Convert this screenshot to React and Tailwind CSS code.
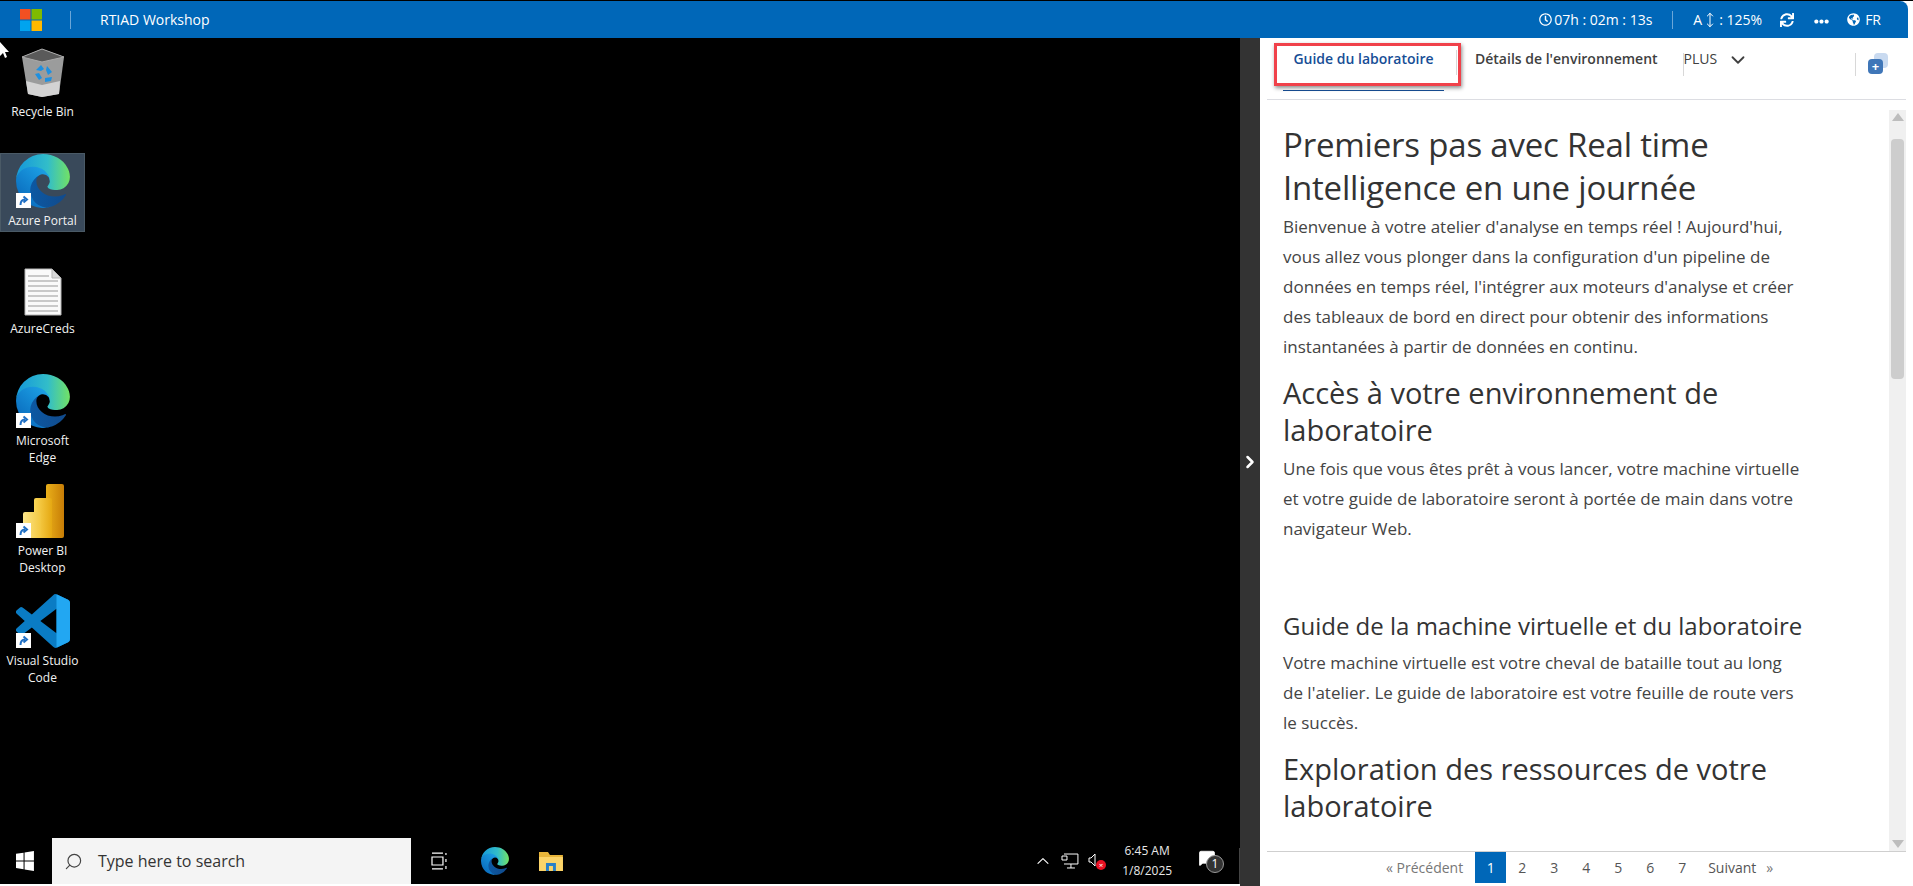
import React from 'react';
import { ChevronDown, ChevronRight, MoveVertical, Search, ChevronUp, MessageSquare } from 'lucide-react';
import { FaRegClock, FaSync, FaEllipsisH, FaGlobeAmericas } from 'react-icons/fa';

const uiFont = { fontFamily: '"Open Sans", "Noto Sans", sans-serif' };

const MsLogo = () => (
  <svg width="22" height="22" viewBox="0 0 22 22" className="shrink-0">
    <rect x="0" y="0" width="10.5" height="10.5" fill="#f25022" />
    <rect x="11.5" y="0" width="10.5" height="10.5" fill="#7fba00" />
    <rect x="0" y="11.5" width="10.5" height="10.5" fill="#00a4ef" />
    <rect x="11.5" y="11.5" width="10.5" height="10.5" fill="#ffb900" />
  </svg>
);

const EdgeLogo = ({ size = 54 }) => (
  <svg width={size} height={size} viewBox="0 0 256 256">
    <defs>
      <linearGradient id="edgeA" x1="60" y1="180" x2="240" y2="180" gradientUnits="userSpaceOnUse">
        <stop offset="0" stopColor="#0c59a4" />
        <stop offset="1" stopColor="#114a8b" />
      </linearGradient>
      <linearGradient id="edgeB" x1="150" y1="100" x2="40" y2="220" gradientUnits="userSpaceOnUse">
        <stop offset="0" stopColor="#1b9de2" />
        <stop offset="1" stopColor="#0b6fc0" />
      </linearGradient>
      <linearGradient id="edgeC" x1="30" y1="90" x2="250" y2="90" gradientUnits="userSpaceOnUse">
        <stop offset="0" stopColor="#1a9fd8" />
        <stop offset="0.55" stopColor="#32bdc9" />
        <stop offset="1" stopColor="#6fe06a" />
      </linearGradient>
    </defs>
    <path fill="url(#edgeA)" d="M231 190.5c-3.4 1.8-6.9 3.4-10.5 4.7a101.5 101.5 0 0 1-35.8 6.4c-47.2 0-88.3-32.4-88.3-74.1a31.4 31.4 0 0 1 16.4-27.3c-42.7 1.8-53.7 46.3-53.7 72.3 0 73.8 68 81.2 82.7 81.2 7.9 0 19.8-2.3 27-4.6l1.3-.4a128 128 0 0 0 66.4-52.7 4 4 0 0 0-5.5-5.5z" />
    <path fill="url(#edgeB)" d="M105.7 241.4A79.2 79.2 0 0 1 83 220a80.7 80.7 0 0 1 29.5-120c3.2-1.5 8.5-4.1 15.6-4a32.4 32.4 0 0 1 25.7 13 31.9 31.9 0 0 1 6.3 18.7c0-.2 24.5-79.6-80-79.6-43.9 0-80 41.6-80 78.2a130.2 130.2 0 0 0 12.1 56 128 128 0 0 0 156.4 67 75.5 75.5 0 0 1-62.8-8z" />
    <path fill="url(#edgeC)" d="M152.3 148.9c-.8 1-3.3 2.5-3.3 5.7 0 2.6 1.7 5.1 4.7 7.2 14.3 9.9 41.2 8.6 41.3 8.6a59.2 59.2 0 0 0 30.1-8.3 61 61 0 0 0 30.4-52.5c.3-22.2-7.9-37-11.2-43.5C223.3 25 179.4 0 128 0A128 128 0 0 0 0 126.2c.5-36.5 36.8-66 80-66 3.5 0 23.5.3 42 10a72.6 72.6 0 0 1 30.9 29.3c6.1 10.6 7.2 24.1 7.2 29.5s-2.7 13.3-7.8 19.9z" />
  </svg>
);

const RecycleBin = () => (
  <svg width="44" height="50" viewBox="0 0 44 50">
    <path d="M1 9 L21 1 L43 9 L38 46 L21 49 L7 46 Z" fill="#9b9c9c" />
    <path d="M1 9 L21 1 L43 9 L21 14 Z" fill="#5a5a5a" stroke="#aaa" strokeWidth="1" />
    <path d="M5 33 L21 37 L39 33 L38 46 L21 49 L7 46 Z" fill="#d3d3d3" />
    <path d="M15 22 l5-5 3 4-3 2z M26 18 l5 6-4 3-2-5z M18 32 l-4-6 4-1 3 5z M24 34 l6-1 1-4-7 1z" fill="#1e90e0" />
  </svg>
);

const DocIcon = () => (
  <svg width="38" height="48" viewBox="0 0 38 48">
    <path d="M1 1 H28 L37 10 V47 H1 Z" fill="#fafafa" stroke="#b5b5b5" strokeWidth="1" />
    <path d="M28 1 V10 H37 Z" fill="#d8d8d8" stroke="#b5b5b5" strokeWidth="1" />
    <path d="M4 8 H25 M4 13 H34 M4 18 H34 M4 23 H34 M4 28 H34 M4 33 H34 M4 38 H34 M4 43 H34" stroke="#b9b9b9" strokeWidth="1.5" />
  </svg>
);

const PowerBi = () => (
  <svg width="42" height="54" viewBox="0 0 42 54">
    <defs>
      <linearGradient id="pbA" x1="0" y1="0" x2="1" y2="0">
        <stop offset="0" stopColor="#eab01a" />
        <stop offset="1" stopColor="#c77d06" />
      </linearGradient>
      <linearGradient id="pbB" x1="0" y1="0" x2="1" y2="0">
        <stop offset="0" stopColor="#fbd757" />
        <stop offset="1" stopColor="#e5a812" />
      </linearGradient>
      <linearGradient id="pbC" x1="0" y1="0" x2="1" y2="0">
        <stop offset="0" stopColor="#fde68a" />
        <stop offset="1" stopColor="#f3c73f" />
      </linearGradient>
    </defs>
    <rect x="24" y="0" width="18" height="54" rx="2" fill="url(#pbA)" />
    <rect x="12" y="14" width="18" height="40" rx="2" fill="url(#pbB)" />
    <rect x="1" y="28" width="18" height="26" rx="2" fill="url(#pbC)" />
  </svg>
);

const VsCode = () => (
  <svg width="54" height="54" viewBox="0 0 24 24">
    <path fill="#0a7cc4" d="M23.15 2.587L18.21.21a1.494 1.494 0 0 0-1.705.29l-9.46 8.63-4.12-3.128a.999.999 0 0 0-1.276.057L.327 7.261A1 1 0 0 0 .326 8.74L3.899 12 .326 15.26a1 1 0 0 0 .001 1.479L1.65 17.94a.999.999 0 0 0 1.276.057l4.12-3.128 9.46 8.63a1.492 1.492 0 0 0 1.704.29l4.942-2.377A1.5 1.5 0 0 0 24 20.06V3.939a1.5 1.5 0 0 0-.85-1.352zm-5.146 14.861L10.826 12l7.178-5.448v10.896z" />
    <path fill="#22a7f2" d="M18 .11l5.15 2.48A1.5 1.5 0 0 1 24 3.94v16.12a1.5 1.5 0 0 1-.85 1.35L18 23.89z" />
  </svg>
);

const ShortcutBadge = () => (
  <span className="absolute left-0 bottom-0 flex h-[15px] w-[15px] items-center justify-center bg-white">
    <svg width="11" height="11" viewBox="0 0 11 11">
      <path d="M2.5 10 C2.5 6 4 4.5 7 4.5 M5.5 1.5 L9 4.5 L5.5 7.5" fill="none" stroke="#1f6fc4" strokeWidth="2" />
    </svg>
  </span>
);

const DesktopIcon = ({ children, label, height, shortcut, selected, iconBox = 'h-[54px] w-[54px]' }) => (
  <div className={`flex w-[85px] flex-col items-center ${height} ${selected ? 'border border-[#4a5a66] bg-[#39495a]' : ''}`}>
    <div className={`relative flex shrink-0 items-center justify-center ${iconBox}`}>
      {children}
      {shortcut && <ShortcutBadge />}
    </div>
    <div className="mt-1 whitespace-pre-line text-center text-[12px] leading-[17px] text-[#f2f2f2]">{label}</div>
  </div>
);

const TopBar = () => (
  <div className="flex h-[37px] shrink-0 items-center rounded-tr-lg bg-[#0067b8] pl-[20px] pr-[27px] text-white">
    <MsLogo />
    <div className="ml-[28px] h-[18px] w-px bg-[#6aa6d8]" />
    <div className="ml-[29px] text-[14px]">RTIAD Workshop</div>
    <div className="ml-auto flex items-center text-[14px]">
      <FaRegClock className="h-[13px] w-[13px]" />
      <span className="ml-[2px]">07h : 02m : 13s</span>
      <div className="ml-[20px] h-[18px] w-px bg-[#6aa6d8]" />
      <span className="ml-[20px]">A</span>
      <MoveVertical className="h-[22px] w-[16px]" strokeWidth={1.5} />
      <span className="ml-[1px]">: 125%</span>
      <FaSync className="ml-[18px] h-[14px] w-[14px]" />
      <FaEllipsisH className="ml-[20px] mt-[4px] h-[15px] w-[15px]" />
      <FaGlobeAmericas className="ml-[18px] h-[13px] w-[13px]" />
      <span className="ml-[5px]">FR</span>
    </div>
  </div>
);

const Tabs = () => (
  <div className="relative flex h-[62px] shrink-0 border-b border-[#dcdde2] pl-[16px] text-[14px] text-[#404040]">
    <div className="flex h-[53px] w-[161px] justify-center border-b border-[#174e96] pt-[10px] font-semibold text-[#174e96]">
      Guide du laboratoire
    </div>
    <div className="ml-[12px] mt-[12px] h-[25px] w-px bg-[#d8d8d8]" />
    <div className="ml-[18px] pt-[10px] font-semibold text-[#404040]">Détails de l'environnement</div>
    <div className="ml-[25px] mt-[15px] flex h-[23px] items-start border-l border-[#d8d8d8] pl-0">
      <span className="-mt-[5px] text-[14px]">PLUS</span>
      <ChevronDown className="-mt-[4px] ml-[10px] h-[22px] w-[22px]" strokeWidth={2} />
    </div>
    <div className="ml-auto mr-[18px] mt-[15px] flex h-[23px] border-l border-[#d8d8d8] pl-[12px]">
      <div className="relative h-[21px] w-[20px]">
        <div className="absolute right-0 top-0 h-[15px] w-[14px] rounded-[4px] bg-[#c9daf0]" />
        <div className="absolute bottom-0 left-0 flex h-[15px] w-[15px] items-center justify-center rounded-[4px] bg-[#3f76b8] text-[13px] font-bold leading-none text-white">+</div>
      </div>
    </div>
    {/* red annotation from the screenshot */}
    <div className="absolute left-[7px] top-[5px] h-[43px] w-[187px] border-[3px] border-[#f0414a] shadow-[1px_2px_4px_rgba(0,0,0,0.45)]" />
  </div>
);

const Scrollbar = () => (
  <div className="flex w-[17px] shrink-0 flex-col items-center justify-between bg-[#f0f0f0] py-[3px]">
    <div className="flex flex-1 flex-col items-center">
      <div className="h-0 w-0 border-x-[6px] border-b-[8px] border-x-transparent border-b-[#bdbdbd]" />
      <div className="mt-[18px] h-[240px] w-[13px] rounded-sm bg-[#cdcdcd]" />
    </div>
    <div className="h-0 w-0 border-x-[6px] border-t-[8px] border-x-transparent border-t-[#bdbdbd]" />
  </div>
);

const Article = () => (
  <div className="flex-1 overflow-hidden pl-[16px] pr-[8px] text-[#333]">
    <h1 className="pt-[13px] text-[33px] leading-[43px] tracking-[-0.2px] text-[#333]">
      Premiers pas avec Real time<br />Intelligence en une journée
    </h1>
    <p className="mt-[3px] text-[17px] leading-[30px] text-[#444]">
      Bienvenue à votre atelier d'analyse en temps réel ! Aujourd'hui,<br />
      vous allez vous plonger dans la configuration d'un pipeline de<br />
      données en temps réel, l'intégrer aux moteurs d'analyse et créer<br />
      des tableaux de bord en direct pour obtenir des informations<br />
      instantanées à partir de données en continu.
    </p>
    <h2 className="mt-[12px] text-[29px] leading-[37px] text-[#333]">
      Accès à votre environnement de<br />laboratoire
    </h2>
    <p className="mt-[6px] text-[17px] leading-[30px] text-[#444]">
      Une fois que vous êtes prêt à vous lancer, votre machine virtuelle<br />
      et votre guide de laboratoire seront à portée de main dans votre<br />
      navigateur Web.
    </p>
    <h3 className="mt-[66px] text-[24px] leading-[32px] text-[#333]">
      Guide de la machine virtuelle et du laboratoire
    </h3>
    <p className="mt-[6px] text-[17px] leading-[30px] text-[#444]">
      Votre machine virtuelle est votre cheval de bataille tout au long<br />
      de l'atelier. Le guide de laboratoire est votre feuille de route vers<br />
      le succès.
    </p>
    <h2 className="mt-[12px] text-[29px] leading-[37px] text-[#333]">
      Exploration des ressources de votre<br />laboratoire
    </h2>
  </div>
);

const Pagination = () => (
  <div className="flex h-[32px] shrink-0 items-center border-t border-[#cfcfcf] pl-[119px] text-[14px] text-[#555]">
    <span className="mr-[12px] text-[#777]">« Précédent</span>
    <span className="flex h-full w-[31px] items-center justify-center bg-[#0067b8] text-white">1</span>
    {['2', '3', '4', '5', '6', '7'].map((n) => (
      <span key={n} className="flex h-full w-[32px] items-center justify-center">{n}</span>
    ))}
    <span className="ml-[10px]">Suivant</span>
    <span className="ml-[10px] text-[#777]">»</span>
  </div>
);

const Taskbar = () => (
  <div className="flex h-[46px] shrink-0 items-center bg-black text-white">
    <svg width="18" height="20" viewBox="0 0 18 20" className="ml-[16px]">
      <path fill="#fff" d="M0 2.8 L7.6 1.6 V9.4 H0 Z M8.6 1.4 L18 0 V9.4 H8.6 Z M0 10.4 H7.6 V18.2 L0 17 Z M8.6 10.4 H18 V20 L8.6 18.6 Z" />
    </svg>
    <div className="ml-[18px] flex h-full w-[360px] items-center bg-[#f4f4f4] pl-[12px] text-[16px] text-[#333]">
      <Search className="h-[19px] w-[19px] -scale-x-100 text-[#444]" strokeWidth={1.5} />
      <span className="ml-[15px]">Type here to search</span>
    </div>
    <svg width="17" height="18" viewBox="0 0 17 18" className="ml-[20px]" fill="none" stroke="#fff" strokeWidth="1.2">
      <path d="M1 1 H12 M1 17 H12 M1 5 H12 V13 H1 Z M15 1 V3 M15 7 V10 M15 14 V17" />
    </svg>
    <div className="ml-[34px]"><EdgeLogo size={28} /></div>
    <svg width="24" height="24" viewBox="0 0 24 24" className="ml-[30px]">
      <path fill="#e8b53a" d="M0 3 H9 L11 6 H24 V22 H0 Z" />
      <path fill="#fcd469" d="M0 8 H24 V22 H0 Z" />
      <rect x="7" y="14" width="10" height="8" fill="#2a80c8" />
      <rect x="10" y="17" width="4" height="5" fill="#fcd469" />
    </svg>
    <ChevronUp className="ml-[470px] h-[20px] w-[20px]" strokeWidth={1.3} />
    <svg width="18" height="16" viewBox="0 0 18 16" className="ml-[8px]" fill="none" stroke="#fff" strokeWidth="1">
      <path d="M3 1 H17 V11 H3 M10 11 V15 M6 15 H14 M1 3 H6 V7 H1 Z" />
    </svg>
    <div className="relative ml-[9px] h-[16px] w-[18px]">
      <svg width="10" height="14" viewBox="0 0 10 14" fill="none" stroke="#fff" strokeWidth="1"><path d="M1 5 H3 L7 1 V13 L3 9 H1 Z" /></svg>
      <span className="absolute -bottom-[1px] right-0 flex h-[10px] w-[10px] items-center justify-center rounded-full bg-[#e81123] text-[8px] leading-none text-white">×</span>
    </div>
    <div className="ml-[16px] flex w-[50px] flex-col items-center text-[12px] leading-[20px] text-[#e8e8e8]">
      <span>6:45 AM</span>
      <span>1/8/2025</span>
    </div>
    <div className="relative ml-[26px] h-[24px] w-[26px]">
      <MessageSquare className="h-[18px] w-[18px] fill-white" strokeWidth={1} />
      <span className="absolute bottom-0 right-0 flex h-[18px] w-[18px] items-center justify-center rounded-full border border-[#999] bg-[#333] text-[12px] leading-none">1</span>
    </div>
    <div className="ml-[15px] mt-[10px] h-[36px] w-px bg-[#444]" />
  </div>
);

const App = () => {
  return (
    <div className="relative flex h-[886px] w-[1913px] flex-col overflow-hidden border-t border-black bg-white pr-[5px]" style={uiFont}>
      <TopBar />
      <div className="flex min-h-0 flex-1">
        <div className="flex w-[1240px] shrink-0 flex-col bg-black">
          <div className="flex flex-1 flex-col pl-0 pt-[9px]">
            <DesktopIcon label="Recycle Bin" height="h-[106px]" iconBox="h-[52px] w-[44px]"><RecycleBin /></DesktopIcon>
            <DesktopIcon label="Azure Portal" height="h-[79px]" shortcut selected><EdgeLogo /></DesktopIcon>
            <div className="h-[36px]" />
            <DesktopIcon label="AzureCreds" height="h-[106px]" iconBox="h-[48px] w-[38px]"><DocIcon /></DesktopIcon>
            <DesktopIcon label={'Microsoft\nEdge'} height="h-[110px]" shortcut><EdgeLogo /></DesktopIcon>
            <DesktopIcon label={'Power BI\nDesktop'} height="h-[110px]" shortcut><PowerBi /></DesktopIcon>
            <DesktopIcon label={'Visual Studio\nCode'} height="h-[100px]" shortcut><VsCode /></DesktopIcon>
          </div>
          <Taskbar />
          <div className="h-[2px] shrink-0 bg-white" />
        </div>
        <div className="flex w-[20px] shrink-0 items-center justify-center bg-[#333]">
          <ChevronRight className="h-[20px] w-[20px] text-white" strokeWidth={3} />
        </div>
        <div className="flex min-w-0 flex-1 flex-col pl-[7px] pr-[2px] pb-[3px] text-[#333]">
          <Tabs />
          <div className="flex min-h-0 flex-1 pt-[10px]">
            <Article />
            <Scrollbar />
          </div>
          <Pagination />
        </div>
      </div>
      {/* mouse pointer on the remote desktop */}
      <svg width="11" height="17" viewBox="0 0 11 17" className="absolute left-0 top-[41px]">
        <path d="M0 0 V14 L3 11 L5 16 L7 15 L5 10 H9 Z" fill="#fff" />
      </svg>
    </div>
  );
};

export default App;
